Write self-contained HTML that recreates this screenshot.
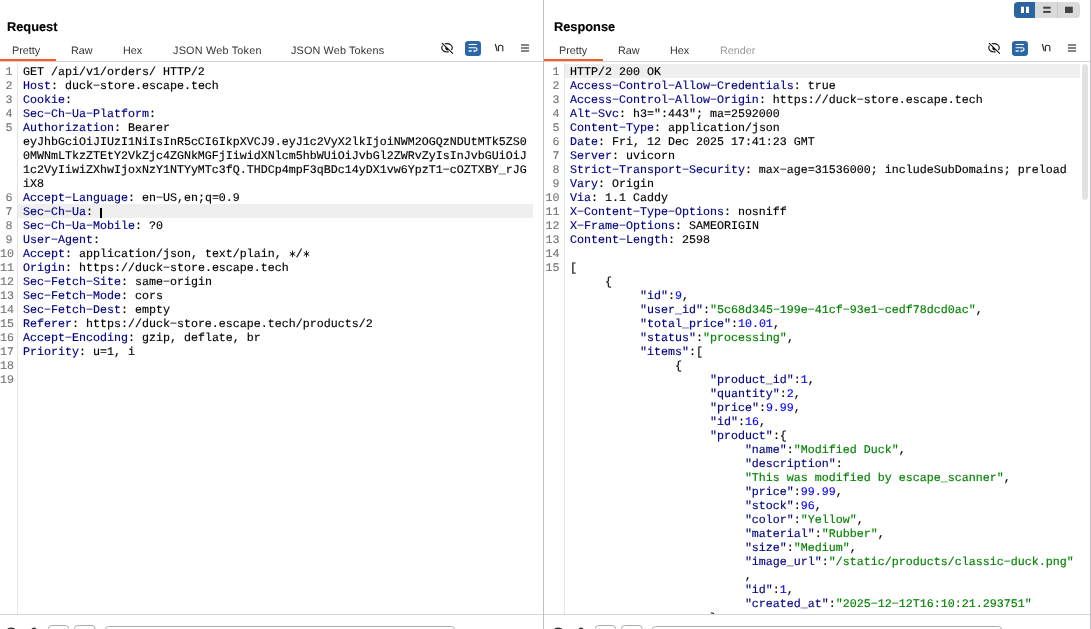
<!DOCTYPE html>
<html><head><meta charset="utf-8">
<style>
*{margin:0;padding:0;box-sizing:border-box}
html,body{width:1091px;height:629px;overflow:hidden;background:#fff}
body{position:relative;text-rendering:geometricPrecision;font-family:"Liberation Sans",sans-serif;color:#333}
.abs{position:absolute}
.title{position:absolute;will-change:transform;top:19px;font-weight:bold;font-size:12.8px;color:#000;-webkit-text-stroke:0.15px;white-space:nowrap}
.tab{position:absolute;will-change:transform;top:45px;font-size:10.8px;color:#333;white-space:nowrap;transform-origin:0 0}
.hline{position:absolute;height:1px;background:#cfd4d7}
.vline{position:absolute;width:1px;background:#c2bec2}
.ul{position:absolute;height:2px;background:#fd5a1e;top:59px}
.nums,.lines{position:absolute;top:65px;will-change:transform;font-family:"Liberation Mono",monospace;font-size:11.67px;line-height:14px;white-space:pre}
.nums{text-align:right;color:#737373;-webkit-text-stroke:0.1px}
.lines{color:#000;-webkit-text-stroke:0.15px}
.nums.rq{left:0;width:12.5px}
.lines.rq{left:23px}
.nums.rs{left:540px;width:19.5px}
.lines.rs{left:570px}
.k{color:#000080}
.s{color:#008000}
.n{color:#0000ff}
.hl{position:absolute;height:14px;background:#efefef}
.cur{display:inline-block;width:2px;height:10px;background:#000;vertical-align:-1px}
.gut{position:absolute;width:1px;background:#e6e6e6;top:62px;height:552px}
</style></head><body>

<!-- highlights -->
<div class="hl" style="left:18px;top:204px;width:515px"></div>
<div class="hl" style="left:565px;top:64px;width:515px"></div>

<!-- gutters -->
<div class="gut" style="left:17px"></div>
<div class="gut" style="left:564px"></div>

<div class="nums rq"><div>1</div><div>2</div><div>3</div><div>4</div><div>5</div><div>&nbsp;</div><div>&nbsp;</div><div>&nbsp;</div><div>&nbsp;</div><div>6</div><div>7</div><div>8</div><div>9</div><div>10</div><div>11</div><div>12</div><div>13</div><div>14</div><div>15</div><div>16</div><div>17</div><div>18</div><div>19</div></div><div class="lines rq"><div>GET /api/v1/orders/ HTTP/2</div><div><span class="k">Host</span>: duck−store.escape.tech</div><div><span class="k">Cookie</span>:</div><div><span class="k">Sec−Ch−Ua−Platform</span>:</div><div><span class="k">Authorization</span>: Bearer</div><div>eyJhbGciOiJIUzI1NiIsInR5cCI6IkpXVCJ9.eyJ1c2VyX2lkIjoiNWM2OGQzNDUtMTk5ZS0</div><div>0MWNmLTkzZTEtY2VkZjc4ZGNkMGFjIiwidXNlcm5hbWUiOiJvbGl2ZWRvZyIsInJvbGUiOiJ</div><div>1c2VyIiwiZXhwIjoxNzY1NTYyMTc3fQ.THDCp4mpF3qBDc14yDX1vw6YpzT1−cOZTXBY_rJG</div><div>iX8</div><div><span class="k">Accept−Language</span>: en−US,en;q=0.9</div><div><span class="k">Sec−Ch−Ua</span>: </div><div><span class="k">Sec−Ch−Ua−Mobile</span>: ?0</div><div><span class="k">User−Agent</span>:</div><div><span class="k">Accept</span>: application/json, text/plain, <svg width="7" height="14" style="vertical-align:top" viewBox="0 0 7 14"><g stroke="#111" stroke-width="0.95"><path d="M3.5 3.6V10.2"/><path d="M0.8 5.3L6.2 8.5"/><path d="M0.8 8.5L6.2 5.3"/></g></svg>/<svg width="7" height="14" style="vertical-align:top" viewBox="0 0 7 14"><g stroke="#111" stroke-width="0.95"><path d="M3.5 3.6V10.2"/><path d="M0.8 5.3L6.2 8.5"/><path d="M0.8 8.5L6.2 5.3"/></g></svg></div><div><span class="k">Origin</span>: https://duck−store.escape.tech</div><div><span class="k">Sec−Fetch−Site</span>: same−origin</div><div><span class="k">Sec−Fetch−Mode</span>: cors</div><div><span class="k">Sec−Fetch−Dest</span>: empty</div><div><span class="k">Referer</span>: https://duck−store.escape.tech/products/2</div><div><span class="k">Accept−Encoding</span>: gzip, deflate, br</div><div><span class="k">Priority</span>: u=1, i</div><div>&nbsp;</div><div>&nbsp;</div></div>
<div class="nums rs"><div>1</div><div>2</div><div>3</div><div>4</div><div>5</div><div>6</div><div>7</div><div>8</div><div>9</div><div>10</div><div>11</div><div>12</div><div>13</div><div>14</div><div>15</div><div>&nbsp;</div><div>&nbsp;</div><div>&nbsp;</div><div>&nbsp;</div><div>&nbsp;</div><div>&nbsp;</div><div>&nbsp;</div><div>&nbsp;</div><div>&nbsp;</div><div>&nbsp;</div><div>&nbsp;</div><div>&nbsp;</div><div>&nbsp;</div><div>&nbsp;</div><div>&nbsp;</div><div>&nbsp;</div><div>&nbsp;</div><div>&nbsp;</div><div>&nbsp;</div><div>&nbsp;</div><div>&nbsp;</div><div>&nbsp;</div><div>&nbsp;</div><div>&nbsp;</div><div>&nbsp;</div></div><div class="lines rs"><div>HTTP/2 200 OK</div><div><span class="k">Access−Control−Allow−Credentials</span>: true</div><div><span class="k">Access−Control−Allow−Origin</span>: https://duck−store.escape.tech</div><div><span class="k">Alt−Svc</span>: h3=":443"; ma=2592000</div><div><span class="k">Content−Type</span>: application/json</div><div><span class="k">Date</span>: Fri, 12 Dec 2025 17:41:23 GMT</div><div><span class="k">Server</span>: uvicorn</div><div><span class="k">Strict−Transport−Security</span>: max−age=31536000; includeSubDomains; preload</div><div><span class="k">Vary</span>: Origin</div><div><span class="k">Via</span>: 1.1 Caddy</div><div><span class="k">X−Content−Type−Options</span>: nosniff</div><div><span class="k">X−Frame−Options</span>: SAMEORIGIN</div><div><span class="k">Content−Length</span>: 2598</div><div>&nbsp;</div><div>[</div><div>     {</div><div>          <span class="k">"id"</span>:<span class="n">9</span>,</div><div>          <span class="k">"user_id"</span>:<span class="s">"5c68d345−199e−41cf−93e1−cedf78dcd0ac"</span>,</div><div>          <span class="k">"total_price"</span>:<span class="n">10.01</span>,</div><div>          <span class="k">"status"</span>:<span class="s">"processing"</span>,</div><div>          <span class="k">"items"</span>:[</div><div>               {</div><div>                    <span class="k">"product_id"</span>:<span class="n">1</span>,</div><div>                    <span class="k">"quantity"</span>:<span class="n">2</span>,</div><div>                    <span class="k">"price"</span>:<span class="n">9.99</span>,</div><div>                    <span class="k">"id"</span>:<span class="n">16</span>,</div><div>                    <span class="k">"product"</span>:{</div><div>                         <span class="k">"name"</span>:<span class="s">"Modified Duck"</span>,</div><div>                         <span class="k">"description"</span>:</div><div>                         <span class="s">"This was modified by escape_scanner"</span>,</div><div>                         <span class="k">"price"</span>:<span class="n">99.99</span>,</div><div>                         <span class="k">"stock"</span>:<span class="n">96</span>,</div><div>                         <span class="k">"color"</span>:<span class="s">"Yellow"</span>,</div><div>                         <span class="k">"material"</span>:<span class="s">"Rubber"</span>,</div><div>                         <span class="k">"size"</span>:<span class="s">"Medium"</span>,</div><div>                         <span class="k">"image_url"</span>:<span class="s">"/static/products/classic−duck.png"</span></div><div>                         ,</div><div>                         <span class="k">"id"</span>:<span class="n">1</span>,</div><div>                         <span class="k">"created_at"</span>:<span class="s">"2025−12−12T16:10:21.293751"</span></div><div>                    }</div></div>

<div class="abs" style="left:100px;top:207.5px;width:2px;height:10px;background:#000"></div>
<!-- lower mask: below bottom line -->
<div class="abs" style="left:0;top:614px;width:1091px;height:15px;background:#fff"></div>
<div class="hline" style="left:0;top:614px;width:1091px;background:#d8d4d8"></div>

<!-- header areas mask -->
<div class="abs" style="left:0;top:0;width:1091px;height:62px;background:#fff"></div>

<!-- Titles -->
<div class="title" style="left:7px">Request</div>
<div class="title" style="left:554px">Response</div>

<!-- Tabs left -->
<div class="tab" style="left:12px">Pretty</div>
<div class="tab" style="left:71px">Raw</div>
<div class="tab" style="left:123px">Hex</div>
<div class="tab" style="left:173px;letter-spacing:0.23px">JSON Web Token</div>
<div class="tab" style="left:291px;letter-spacing:0.16px">JSON Web Tokens</div>
<div class="ul" style="left:0;width:56px"></div>

<!-- Tabs right -->
<div class="tab" style="left:559px">Pretty</div>
<div class="tab" style="left:618px">Raw</div>
<div class="tab" style="left:670px">Hex</div>
<div class="tab" style="left:720px;color:#999">Render</div>
<div class="ul" style="left:544px;width:59px"></div>

<div class="hline" style="left:0;top:61px;width:543px"></div>
<div class="hline" style="left:544px;top:61px;width:546px"></div>

<!-- icons left -->
<svg class="abs" style="left:0;top:0" width="1091" height="62" viewBox="0 0 1091 62">
 <g>
  <!-- eye slash -->
  <ellipse cx="447" cy="47.8" rx="5.3" ry="4.2" fill="none" stroke="#111" stroke-width="1.1"/>
  <line x1="442" y1="43" x2="452.6" y2="53.3" stroke="#fff" stroke-width="3"/>
  <path d="M445.8 46.7 A2.2 2.2 0 0 0 448.9 49.8 Z" fill="#111"/>
  <line x1="442.3" y1="43.3" x2="452.6" y2="53.3" stroke="#111" stroke-width="1.15" stroke-linecap="round"/>
  <!-- wrap button -->
  <rect x="465" y="41" width="16" height="15" rx="3.2" fill="#2b66a6"/>
  <path d="M468.6 44.5 H476.9" stroke="#fff" stroke-width="1.1"/>
  <path d="M468.6 47.7 H475.4 A1.65 1.65 0 0 1 475.4 51 H473.6" stroke="#fff" stroke-width="1.1" fill="none"/>
  <path d="M474.8 49.9 L473.6 51 L474.8 52.1" stroke="#fff" stroke-width="0.9" fill="none"/>
  <path d="M468.6 51 H471.8" stroke="#fff" stroke-width="1.4"/>
  <!-- \n -->
  <path d="M495.3 44 L497.2 51.2" stroke="#222" stroke-width="1.1" fill="none"/>
  <path d="M498.4 51.2 V47.2 Q498.4 45.2 500.6 45.2 Q502.8 45.2 502.8 47.2 V51.2" stroke="#222" stroke-width="1.1" fill="none"/>
  <!-- hamburger -->
  <rect x="521" y="44.2" width="8" height="1.6" fill="#666"/>
  <rect x="521" y="47.2" width="8" height="1.6" fill="#666"/>
  <rect x="521" y="50.2" width="8" height="1.6" fill="#666"/>
 </g>
 <g transform="translate(547 0)">
  <!-- eye slash -->
  <ellipse cx="447" cy="47.8" rx="5.3" ry="4.2" fill="none" stroke="#111" stroke-width="1.1"/>
  <line x1="442" y1="43" x2="452.6" y2="53.3" stroke="#fff" stroke-width="3"/>
  <path d="M445.8 46.7 A2.2 2.2 0 0 0 448.9 49.8 Z" fill="#111"/>
  <line x1="442.3" y1="43.3" x2="452.6" y2="53.3" stroke="#111" stroke-width="1.15" stroke-linecap="round"/>
  <!-- wrap button -->
  <rect x="465" y="41" width="16" height="15" rx="3.2" fill="#2b66a6"/>
  <path d="M468.6 44.5 H476.9" stroke="#fff" stroke-width="1.1"/>
  <path d="M468.6 47.7 H475.4 A1.65 1.65 0 0 1 475.4 51 H473.6" stroke="#fff" stroke-width="1.1" fill="none"/>
  <path d="M474.8 49.9 L473.6 51 L474.8 52.1" stroke="#fff" stroke-width="0.9" fill="none"/>
  <path d="M468.6 51 H471.8" stroke="#fff" stroke-width="1.4"/>
  <!-- \n -->
  <path d="M495.3 44 L497.2 51.2" stroke="#222" stroke-width="1.1" fill="none"/>
  <path d="M498.4 51.2 V47.2 Q498.4 45.2 500.6 45.2 Q502.8 45.2 502.8 47.2 V51.2" stroke="#222" stroke-width="1.1" fill="none"/>
  <!-- hamburger -->
  <rect x="521" y="44.2" width="8" height="1.6" fill="#666"/>
  <rect x="521" y="47.2" width="8" height="1.6" fill="#666"/>
  <rect x="521" y="50.2" width="8" height="1.6" fill="#666"/>
 </g>
 <!-- layout buttons -->
 <rect x="1014" y="2" width="66" height="16" rx="4" fill="#dadada"/>
 <path d="M1018 2 H1035 V18 H1018 A4 4 0 0 1 1014 14 V6 A4 4 0 0 1 1018 2 Z" fill="#2b64a0"/>
 <rect x="1057" y="2" width="1" height="16" fill="#c8c8c8"/>
 <rect x="1021" y="6.7" width="3" height="6.3" fill="#fff"/>
 <rect x="1026" y="6.7" width="3" height="6.3" fill="#fff"/>
 <rect x="1043.2" y="6.7" width="7.5" height="2" fill="#444"/>
 <rect x="1043.2" y="10.9" width="7.5" height="2" fill="#444"/>
 <rect x="1065" y="6.7" width="7.8" height="6.3" fill="#444"/>
</svg>

<!-- dividers -->
<div class="vline" style="left:543px;top:0;height:629px"></div>
<div class="vline" style="left:1090px;top:0;height:629px"></div>

<!-- scrollbar -->
<div class="abs" style="left:1082px;top:64px;width:6px;height:136px;border-radius:3px;background:#e2e2e2"></div>

<!-- bottom partial controls -->
<svg class="abs" style="left:0;top:614px" width="1091" height="15" viewBox="0 614 1091 15">
 <g>
  <ellipse cx="11.2" cy="630" rx="4.3" ry="2.6" fill="#333"/>
  <ellipse cx="34" cy="630" rx="2.6" ry="2.6" fill="#333"/>
  <rect x="48.5" y="625.5" width="20" height="10" rx="3" fill="none" stroke="#aaa" stroke-width="1"/>
  <rect x="74.5" y="625.5" width="20.5" height="10" rx="3" fill="none" stroke="#aaa" stroke-width="1"/>
  <rect x="105.5" y="626.5" width="349" height="10" rx="3" fill="none" stroke="#aaa" stroke-width="1"/>
 </g>
 <g transform="translate(547 0)">
  <ellipse cx="11.2" cy="630" rx="4.3" ry="2.6" fill="#333"/>
  <ellipse cx="34" cy="630" rx="2.6" ry="2.6" fill="#333"/>
  <rect x="48.5" y="625.5" width="20" height="10" rx="3" fill="none" stroke="#aaa" stroke-width="1"/>
  <rect x="74.5" y="625.5" width="20.5" height="10" rx="3" fill="none" stroke="#aaa" stroke-width="1"/>
  <rect x="105.5" y="626.5" width="349" height="10" rx="3" fill="none" stroke="#aaa" stroke-width="1"/>
 </g>
</svg>

</body></html>
